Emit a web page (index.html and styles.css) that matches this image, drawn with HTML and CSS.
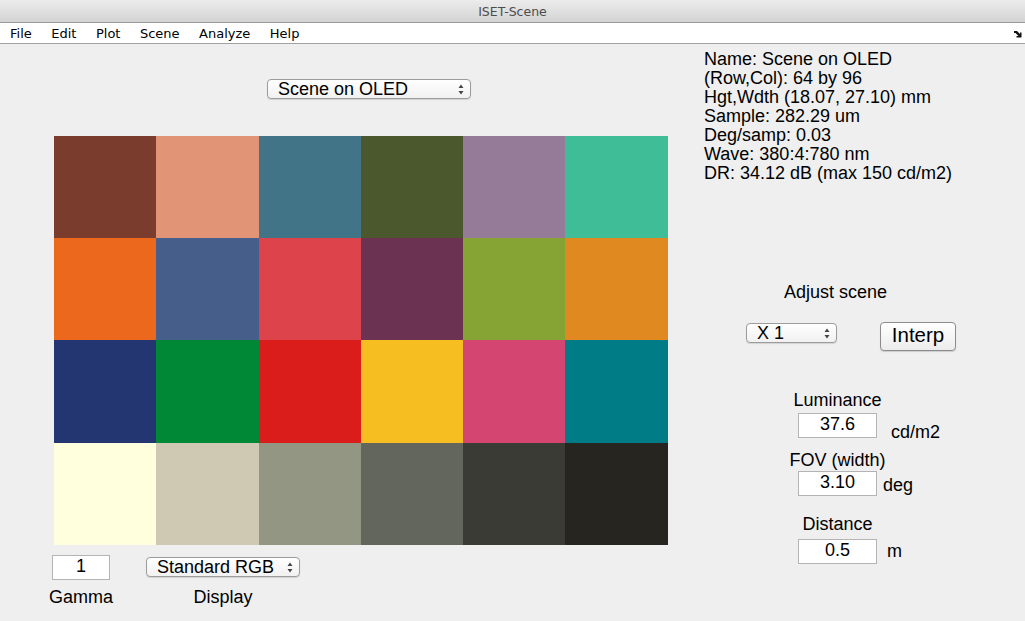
FILE: index.html
```html
<!DOCTYPE html>
<html lang="en">
<head>
<meta charset="utf-8">
<title>ISET-Scene</title>
<link rel="stylesheet" href="styles.css">
</head>
<body>
<div class="titlebar"><span class="title">ISET-Scene</span></div>
<div class="menubar">
  <span class="menu-item">File</span>
  <span class="menu-item">Edit</span>
  <span class="menu-item">Plot</span>
  <span class="menu-item">Scene</span>
  <span class="menu-item">Analyze</span>
  <span class="menu-item">Help</span>
  <span class="menu-spacer"></span>
  <svg class="dock-icon" width="8" height="7" viewBox="0 0 8 7"><path d="M0 0 H3 L6 3 V1.5 H7.5 V6.5 H2.5 V5 H4.5 L1.5 2 H0 Z" fill="#111"/></svg>
</div>
<div class="content">
  <div class="left">
    <div class="popup popup-scene"><span>Scene on OLED</span><svg class="arrows" width="6" height="11" viewBox="0 0 6 11"><path d="M0.5 4 L3 0.5 L5.5 4 Z M0.5 7 L3 10.5 L5.5 7 Z" fill="#444"/></svg></div>
    <div class="chart">
      <div class="cell c1"></div><div class="cell c2"></div><div class="cell c3"></div><div class="cell c4"></div><div class="cell c5"></div><div class="cell c6"></div>
      <div class="cell c7"></div><div class="cell c8"></div><div class="cell c9"></div><div class="cell c10"></div><div class="cell c11"></div><div class="cell c12"></div>
      <div class="cell c13"></div><div class="cell c14"></div><div class="cell c15"></div><div class="cell c16"></div><div class="cell c17"></div><div class="cell c18"></div>
      <div class="cell c19"></div><div class="cell c20"></div><div class="cell c21"></div><div class="cell c22"></div><div class="cell c23"></div><div class="cell c24"></div>
    </div>
    <div class="bottom">
      <div class="ctl ctl-gamma">
        <div class="edit edit-gamma">1</div>
        <div class="ctl-label ctl-label-gamma">Gamma</div>
      </div>
      <div class="ctl ctl-display">
        <div class="popup popup-display"><span>Standard RGB</span><svg class="arrows" width="6" height="11" viewBox="0 0 6 11"><path d="M0.5 4 L3 0.5 L5.5 4 Z M0.5 7 L3 10.5 L5.5 7 Z" fill="#444"/></svg></div>
        <div class="ctl-label ctl-label-display">Display</div>
      </div>
    </div>
  </div>
  <div class="right">
    <div class="info">
      <div>Name: Scene on OLED</div>
      <div>(Row,Col): 64 by 96</div>
      <div>Hgt,Wdth (18.07, 27.10) mm</div>
      <div>Sample: 282.29 um</div>
      <div>Deg/samp: 0.03</div>
      <div>Wave: 380:4:780 nm</div>
      <div>DR: 34.12 dB (max 150 cd/m2)</div>
    </div>
    <div class="adjust-label">Adjust scene</div>
    <div class="adjust-row">
      <div class="popup popup-scale"><span>X 1</span><svg class="arrows" width="6" height="11" viewBox="0 0 6 11"><path d="M0.5 4 L3 0.5 L5.5 4 Z M0.5 7 L3 10.5 L5.5 7 Z" fill="#444"/></svg></div>
      <button class="btn-interp">Interp</button>
    </div>
    <div class="field field-lum">
      <div class="field-label">Luminance</div>
      <div class="field-row">
        <div class="edit">37.6</div>
        <div class="unit unit-lum">cd/m2</div>
      </div>
    </div>
    <div class="field field-fov">
      <div class="field-label">FOV (width)</div>
      <div class="field-row">
        <div class="edit">3.10</div>
        <div class="unit unit-fov">deg</div>
      </div>
    </div>
    <div class="field field-dist">
      <div class="field-label">Distance</div>
      <div class="field-row">
        <div class="edit">0.5</div>
        <div class="unit unit-dist">m</div>
      </div>
    </div>
  </div>
</div>
</body>
</html>
```
FILE: styles.css
```css
* { box-sizing: border-box; }
html, body { margin: 0; padding: 0; }
body {
  width: 1025px;
  height: 621px;
  overflow: hidden;
  background: #efefef;
  font-family: "Liberation Sans", Arial, sans-serif;
  font-size: 18px;
  color: #000;
}

.titlebar {
  height: 23px;
  background: linear-gradient(#ececec, #d3d3d3);
  border-bottom: 1px solid #9a9a9a;
  display: flex;
  justify-content: center;
  align-items: center;
}
.title {
  font-family: "DejaVu Sans", sans-serif;
  font-size: 12.5px;
  color: #4d4d4d;
}

.menubar {
  height: 21px;
  background: #ffffff;
  border-bottom: 1px solid #a3a3a3;
  display: flex;
  align-items: center;
  padding-left: 10px;
  gap: 19.5px;
  font-family: "DejaVu Sans", sans-serif;
  font-size: 13px;
}
.menu-spacer { flex: 1; }
.dock-icon { margin-right: 3px; margin-top: 2px; }

.content { display: flex; }
.left {
  width: 704px;
  padding-left: 54px;
}

.popup {
  height: 20px;
  border: 1px solid #9c9c9c;
  border-radius: 4px;
  background: linear-gradient(#ffffff, #f1f1f1);
  box-shadow: 0 1px 1px rgba(0,0,0,0.12);
  display: flex;
  align-items: center;
  justify-content: space-between;
  padding: 0 6px 0 10px;
  line-height: 1;
}
.arrows { flex: none; }
.popup-scene {
  margin-left: 213px;
  margin-top: 35px;
  width: 204px;
}

.chart {
  margin-top: 37px;
  width: 614px;
  height: 409px;
  display: grid;
  grid-template-columns: 102px 103px 102px 102px 102px 103px;
  grid-template-rows: 102px 102px 103px 102px;
}
.c1 { background: #7a3d2d; }
.c2 { background: #e19576; }
.c3 { background: #427488; }
.c4 { background: #4b582d; }
.c5 { background: #957b97; }
.c6 { background: #3fbd96; }
.c7 { background: #eb681c; }
.c8 { background: #465f8a; }
.c9 { background: #dd434b; }
.c10 { background: #6b3351; }
.c11 { background: #85a434; }
.c12 { background: #e08921; }
.c13 { background: #233671; }
.c14 { background: #008837; }
.c15 { background: #da1d1a; }
.c16 { background: #f6be20; }
.c17 { background: #d44671; }
.c18 { background: #007c86; }
.c19 { background: #ffffdd; }
.c20 { background: #cfc9b4; }
.c21 { background: #939683; }
.c22 { background: #63665c; }
.c23 { background: #3b3b35; }
.c24 { background: #262520; }

.bottom {
  display: flex;
  align-items: flex-start;
  margin-top: 10px;
}
.ctl {
  display: flex;
  flex-direction: column;
  align-items: center;
}
.ctl-gamma { margin-left: -2px; width: 58px; }
.ctl-display { margin-left: 36px; width: 154px; }
.ctl-label { line-height: 19px; white-space: nowrap; }
.ctl-label-gamma { margin-top: 8px; }
.ctl-label-display { margin-top: 11px; }
.popup-display { width: 154px; margin-top: 2px; }

.edit {
  width: 79px;
  height: 25px;
  background: #ffffff;
  border: 1px solid #b4b4b4;
  text-align: center;
  line-height: 21px;
}
.edit-gamma { width: 58px; }

.right { width: 321px; }
.info {
  margin-top: 6px;
  line-height: 19px;
  white-space: nowrap;
}
.adjust-label {
  margin-top: 100px;
  margin-left: 80px;
  line-height: 19px;
}
.adjust-row {
  display: flex;
  align-items: flex-start;
  margin-top: 20px;
}
.popup-scale {
  width: 91px;
  margin-left: 42px;
  margin-top: 1px;
}
.btn-interp {
  margin-left: 43px;
  width: 76px;
  height: 29px;
  border: 1px solid #8c8c8c;
  border-radius: 4px;
  background: linear-gradient(#ffffff, #ececec);
  box-shadow: 0 1px 1px rgba(0,0,0,0.15);
  font-family: "Liberation Sans", Arial, sans-serif;
  font-size: 20.5px;
  color: #000;
  padding: 0 0 2px 0;
  line-height: 1;
}

.field {
  margin-left: 94px;
  display: flex;
  flex-direction: column;
}
.field-label {
  width: 79px;
  display: flex;
  justify-content: center;
  white-space: nowrap;
  line-height: 19px;
}
.field-row {
  display: flex;
  align-items: flex-start;
}
.unit { line-height: 19px; white-space: nowrap; }

.field-lum { margin-top: 40px; }
.field-lum .field-row { margin-top: 3px; }
.unit-lum { margin-left: 14px; margin-top: 10px; }

.field-fov { margin-top: 9px; }
.field-fov .field-row { margin-top: 1px; }
.unit-fov { margin-left: 6px; margin-top: 5px; }

.field-dist { margin-top: 19px; }
.field-dist .field-row { margin-top: 5px; }
.unit-dist { margin-left: 10px; margin-top: 3px; }
```
